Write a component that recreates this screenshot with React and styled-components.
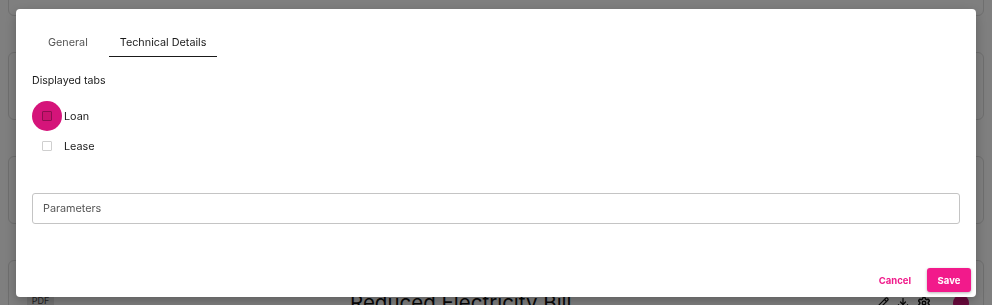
import React from "react";
import styled, { createGlobalStyle } from "styled-components";
import { Pencil, Download, Settings } from "lucide-react";

const Global = createGlobalStyle`
  html, body { margin: 0; padding: 0; background: #fff; overflow: hidden; }
  body { font-family: Inter, "Noto Sans", sans-serif; color: #1a1a1a; }
  * { box-sizing: border-box; }
`;

const Page = styled.div`
  display: flex;
  flex-direction: column;
  gap: 36px;
  padding: 0 8px;
  margin-top: -52px;
  height: 357px;
  overflow: hidden;
`;

const Card = styled.div`
  height: ${(p) => p.$h || 68}px;
  flex-shrink: 0;
  border: 1px solid #dedede;
  border-radius: 6px;
`;

const HeadRow = styled.div`
  display: flex;
  align-items: flex-start;
  padding: 24px 14px 0 18px;
`;

const PdfTag = styled.div`
  font-size: 9px;
  color: #444;
  background: #e6e6e6;
  padding: 10px 3px 2px;
  width: 27px;
  text-align: center;
`;

const CardTitle = styled.div`
  font-size: 20.5px;
  margin-top: 5px;
  margin-left: 296px;
  color: #111;
  white-space: nowrap;
`;

const Icons = styled.div`
  display: flex;
  align-items: center;
  gap: 8px;
  margin-top: 10px;
  margin-left: auto;
  color: #111;
`;

const Dot = styled.span`
  width: 16px;
  height: 16px;
  border-radius: 50%;
  background: #d5147a;
  margin-left: 14px;
`;

const Overlay = styled.div`
  position: fixed;
  inset: 0;
  background: rgba(0, 0, 0, 0.5);
`;

const Dialog = styled.div`
  position: fixed;
  left: 16px;
  top: 9px;
  width: 960px;
  height: 288px;
  background: #fff;
  border-radius: 4px;
  box-shadow: 0 4px 12px rgba(0, 0, 0, 0.25);
  display: flex;
  flex-direction: column;
`;

const Body = styled.div`
  flex: 1;
  padding: 20px 16px 0;
  display: flex;
  flex-direction: column;
`;

const Tabs = styled.div`
  display: flex;
  gap: 10px;
  padding-left: 5px;
`;

const Tab = styled.div`
  height: 28px;
  padding: 0 11px;
  display: flex;
  align-items: center;
  font-size: 10.8px;
  color: ${(p) => (p.$active ? "#1a1a1a" : "#555")};
  border-bottom: 1.5px solid ${(p) => (p.$active ? "#1a1a1a" : "transparent")};
`;

const Label = styled.div`
  font-size: 10.6px;
  margin-top: 17px;
  line-height: 14px;
  color: #1a1a1a;
`;

const Options = styled.div`
  display: flex;
  flex-direction: column;
  margin-top: 13px;
`;

const Option = styled.label`
  display: flex;
  align-items: center;
  height: 30px;
  font-size: 10.8px;
  color: #1a1a1a;
`;

const BoxWrap = styled.span`
  width: 30px;
  height: 30px;
  border-radius: 50%;
  display: flex;
  align-items: center;
  justify-content: center;
  background: ${(p) => (p.$focus ? "#d5147a" : "transparent")};
  margin-right: 2px;
`;

const Box = styled.span`
  width: 10px;
  height: 10px;
  border-radius: 1px;
  border: 1px solid ${(p) => (p.$focus ? "#8c0f50" : "#cfcfcf")};
  background: ${(p) => (p.$focus ? "#c9136f" : "#fff")};
`;

const Field = styled.div`
  margin-top: 32px;
  height: 31px;
  border: 1px solid #c4c4c4;
  border-radius: 3px;
  display: flex;
  align-items: center;
  padding: 0 10px;
  font-size: 10.8px;
  color: #555;
`;

const Footer = styled.div`
  display: flex;
  justify-content: flex-end;
  align-items: center;
  gap: 16px;
  padding: 0 5px 5px;
`;

const TextButton = styled.button`
  border: none;
  background: none;
  color: #f0198a;
  font-family: inherit;
  font-weight: 700;
  font-size: 9.5px;
  padding: 0;
`;

const SaveButton = styled.button`
  border: none;
  background: #f21a8b;
  color: #fff;
  font-family: inherit;
  font-weight: 700;
  font-size: 9.5px;
  width: 44px;
  height: 24px;
  border-radius: 3px;
  box-shadow: 0 1px 3px rgba(0, 0, 0, 0.3);
`;

export default function App() {
  return (
    <>
      <Global />
      <Page>
        <Card />
        <Card />
        <Card />
        <Card $h={120}>
          <HeadRow>
            <PdfTag>PDF</PdfTag>
            <CardTitle>Reduced Electricity Bill</CardTitle>
            <Icons>
              <Pencil size={12} strokeWidth={2.5} />
              <Download size={12} strokeWidth={2.5} />
              <Settings size={14} strokeWidth={2.5} />
              <Dot />
            </Icons>
          </HeadRow>
        </Card>
      </Page>
      <Overlay />
      <Dialog>
        <Body>
          <Tabs>
            <Tab>General</Tab>
            <Tab $active>Technical Details</Tab>
          </Tabs>
          <Label>Displayed tabs</Label>
          <Options>
            <Option>
              <BoxWrap $focus>
                <Box $focus />
              </BoxWrap>
              Loan
            </Option>
            <Option>
              <BoxWrap>
                <Box />
              </BoxWrap>
              Lease
            </Option>
          </Options>
          <Field>Parameters</Field>
        </Body>
        <Footer>
          <TextButton>Cancel</TextButton>
          <SaveButton>Save</SaveButton>
        </Footer>
      </Dialog>
    </>
  );
}
